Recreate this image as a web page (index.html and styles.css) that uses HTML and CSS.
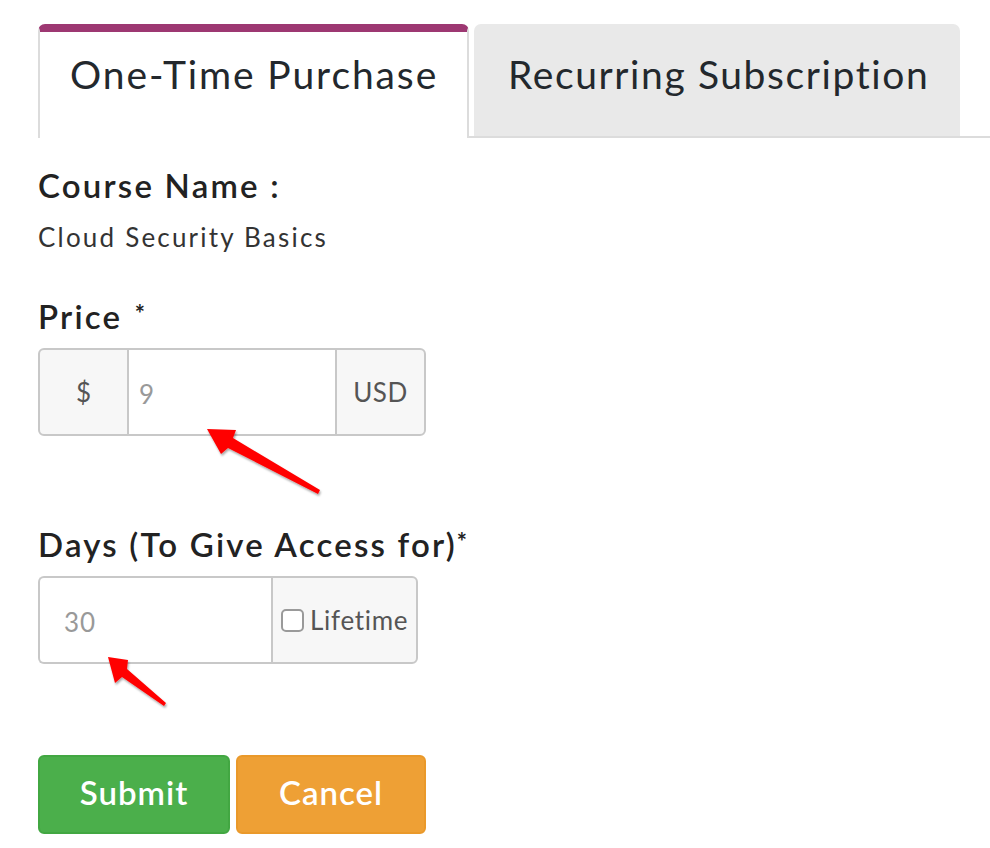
FILE: index.html
```html
<!DOCTYPE html>
<html lang="en">
<head>
<meta charset="utf-8">
<title>Course pricing</title>
<link rel="stylesheet" href="styles.css">
</head>
<body>
<div class="page">
  <ul class="tabs">
    <li class="tab tab-active">One-Time Purchase</li>
    <li class="tab tab-idle">Recurring Subscription</li>
  </ul>

  <form class="form">
    <div class="field field-course">
      <div class="label">Course Name :</div>
      <div class="value">Cloud Security Basics</div>
    </div>

    <div class="field field-price">
      <div class="label">Price <span class="req">*</span></div>
      <div class="group group-price">
        <span class="addon addon-dollar">$</span>
        <span class="input input-price">9</span>
        <span class="addon addon-usd">USD</span>
      </div>
    </div>

    <div class="field field-days">
      <div class="label">Days (To Give Access for)<span class="req req-tight">*</span></div>
      <div class="group group-days">
        <span class="input input-days">30</span>
        <label class="addon addon-life"><span class="check"></span>Lifetime</label>
      </div>
    </div>

    <div class="actions">
      <button type="button" class="btn btn-submit">Submit</button>
      <button type="button" class="btn btn-cancel">Cancel</button>
    </div>
  </form>

  <svg class="arrows" width="990" height="848" viewBox="0 0 990 848">
    <defs>
      <filter id="sh" x="-20%" y="-20%" width="140%" height="140%">
        <feDropShadow dx="1" dy="2" stdDeviation="1.2" flood-color="#000" flood-opacity="0.35"/>
      </filter>
    </defs>
    <polygon filter="url(#sh)" fill="#ff0000" points="207,429 236,430 233,438 320,490 318,494 228,448 221,454"/>
    <polygon filter="url(#sh)" fill="#ff0000" points="108,657 128,660 127,669 166,703 164,706 122,677 115,683"/>
  </svg>
</div>
</body>
</html>
```

FILE: styles.css
```css
* { box-sizing: border-box; }

html, body {
  margin: 0;
  padding: 0;
  background: #ffffff;
}

body {
  font-family: "Lato", "Open Sans", sans-serif;
  color: #222;
}

.page {
  position: relative;
  width: 990px;
  height: 848px;
  padding: 24px 0 0 38px;
  overflow: hidden;
}

.tabs {
  list-style: none;
  margin: 0;
  padding: 0;
  display: flex;
  align-items: flex-end;
  gap: 5px;
  border-bottom: 2px solid #dcdcdc;
  height: 114px;
}

.tab {
  height: 112px;
  font-size: 39px;
  color: #23282d;
  line-height: 1;
  border-radius: 7px 7px 0 0;
  white-space: nowrap;
}

.tab-active {
  width: 431px;
  background: #fff;
  border-top: 8px solid #9d3872;
  border-left: 2px solid #dcdcdc;
  border-right: 2px solid #dcdcdc;
  margin-bottom: -2px;
  height: 114px;
  padding: 23px 0 0 30px;
  letter-spacing: 1.9px;
}

.tab-idle {
  width: 486px;
  background: #e9e9e9;
  padding: 31px 0 0 34px;
  letter-spacing: 1.6px;
}

.form {
  padding-top: 27px;
}

.label {
  font-size: 33px;
  font-weight: 600;
  line-height: 40px;
  color: #222;
  letter-spacing: 2.2px;
}

.req {
  display: inline-block;
  font-size: 24px;
  font-weight: 700;
  line-height: 1;
  vertical-align: top;
  position: relative;
  top: 6px;
  margin-left: 2px;
  letter-spacing: 0;
}

.req-tight { margin-left: 0; }

.value {
  font-size: 26px;
  line-height: 31px;
  color: #333;
  margin-top: 17px;
  letter-spacing: 2.2px;
}

.field-price { margin-top: 43px; }

.group {
  display: flex;
  margin-top: 12px;
  height: 88px;
}

.addon, .input {
  border: 2px solid #c8c8c8;
  font-size: 26px;
  display: flex;
  align-items: center;
}

.addon {
  background: #f7f7f7;
  color: #555;
  justify-content: center;
}

.input {
  background: #fff;
  color: #999;
}

.addon-dollar {
  width: 91px;
  border-radius: 6px 0 0 6px;
}

.input-price {
  width: 206px;
  border-left: none;
  border-right: none;
  padding: 4px 0 0 10px;
}

.addon-usd {
  width: 91px;
  border-radius: 0 6px 6px 0;
  letter-spacing: 0.5px;
}

.field-days { margin-top: 88px; }

.input-days {
  width: 233px;
  border-radius: 6px 0 0 6px;
  border-right: none;
  padding: 4px 0 0 24px;
  letter-spacing: 1px;
}

.addon-life {
  width: 147px;
  border-radius: 0 6px 6px 0;
  justify-content: flex-start;
  padding-left: 8px;
  gap: 6px;
  letter-spacing: 0.7px;
}

.check {
  width: 23px;
  height: 23px;
  border: 2px solid #9a9a9a;
  border-radius: 5px;
  background: #fff;
}

.actions {
  display: flex;
  gap: 6px;
  margin-top: 91px;
}

.btn {
  height: 79px;
  border-radius: 6px;
  font-family: inherit;
  font-size: 33px;
  font-weight: 600;
  color: #fff;
  cursor: pointer;
  padding: 0 0 5px 0;
  letter-spacing: 1px;
}

.btn-submit {
  width: 192px;
  background: #4baf4b;
  border: 2px solid #42a742;
}

.btn-cancel {
  width: 190px;
  background: #eea035;
  border: 2px solid #ea992a;
}

.arrows {
  position: absolute;
  left: 0;
  top: 0;
  pointer-events: none;
}
```
